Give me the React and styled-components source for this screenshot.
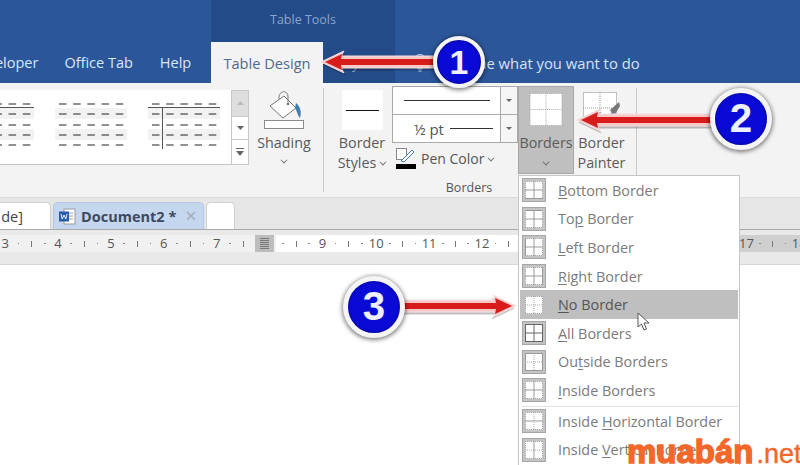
import React from "react";
import styled, { createGlobalStyle } from "styled-components";

const Global = createGlobalStyle`
  html, body { margin: 0; padding: 0; background: #fff; }
  body { width: 800px; height: 465px; overflow: hidden; font-family: "Open Sans", "Noto Sans", sans-serif; }
  #root { width: 800px; height: 465px; }
`;

const Page = styled.div`
  position: relative; width: 800px; height: 465px; overflow: hidden; background: #fff;
  display: flex; flex-direction: column;
`;
const TitleBar = styled.div`
  height: 42px; background: #2b579a; display: flex; padding-left: 211px; flex: none;
`;
const ContextLabel = styled.div`
  width: 184px; background: #234b87; color: #8aa6d2; font-size: 12.5px; text-align: center; line-height: 40px;
`;
const TabBar = styled.div`
  height: 41px; background: #2b579a; display: flex; flex: none; align-items: stretch;
`;
const MainTabs = styled.div`
  width: 211px; flex: none; display: flex; overflow: hidden;
`;
const Tab = styled.div`
  color: #dbe6f5; font-size: 14.5px; line-height: 42px; white-space: nowrap; flex: none;
  margin-left: ${p => p.$ml ?? 0}px;
`;
const ContextTabs = styled.div`
  display: flex; background: #234b87; width: 184px; flex: none;
`;
const ActiveTab = styled.div`
  width: 112px; background: #f3f3f3; color: #4e6a92; font-size: 14.6px; line-height: 42px; text-align: center; flex: none;
`;
const ContextTab = styled.div`
  flex: 1; color: #8aa0c4; font-size: 14px; line-height: 42px; text-align: center;
`;
const TellMe = styled.div`
  color: #d6e3f5; font-size: 14.8px; line-height: 42px; margin-left: 18px; display: flex; align-items: center; gap: 18px; white-space: nowrap;
`;

const Ribbon = styled.div`
  height: 115px; background: #f3f3f3; border-bottom: 1px solid #dcdcdc; display: flex; flex: none; box-sizing: border-box;
`;
const GalleryWrap = styled.div`
  width: 250px; flex: none; padding-top: 7px; display: flex; align-items: flex-start;
`;
const Gallery = styled.div`
  width: 269px; height: 75px; background: #fff; border-bottom: 1px solid #c6c6c6; display: flex; gap: 21px; padding-top: 10px; box-sizing: border-box; margin-left: -38px; flex: none;
`;
const Scroller = styled.div`
  width: 18px; height: 75px; display: flex; flex-direction: column; border: 1px solid #c8c8c8; box-sizing: border-box; background: #fff; flex: none;
`;
const ScrollBtn = styled.div`
  flex: ${p => p.$h}; background: ${p => p.$off ? "#dedede" : "#fff"}; display: flex; align-items: center; justify-content: center; color: #6a6a6a;
  & + & { border-top: 1px solid #c8c8c8; }
`;
const ShadingCol = styled.div`
  width: 68px; flex: none; padding-top: 7px; display: flex; flex-direction: column; align-items: center; margin-right: 5px;
`;
const ShadingText = styled.div`
  font-size: 14.3px; line-height: 20px; color: #5a5a5a; text-align: center; white-space: nowrap; margin-top: 3px;
`;
const BigLabel = styled.div`
  font-size: 14.3px; line-height: 20px; color: #5a5a5a; text-align: center; white-space: nowrap;
`;
const Chev = styled.span`
  display: inline-block; width: 5px; height: 5px; border-right: 1px solid #666; border-bottom: 1px solid #666;
  transform: rotate(45deg) scale(.8); margin: ${p => p.$m || "0 0 3px 4px"};
`;
const Sep = styled.div`
  width: 1px; background: #c8c8c8; margin: 5px 0 5px; flex: none;
`;
const Group = styled.div`
  width: 312px; flex: none; display: flex; flex-direction: column;
`;
const GroupTools = styled.div`
  height: 91px; display: flex; padding-top: 3px;
`;
const GroupLabel = styled.div`
  text-align: center; font-size: 12.5px; color: #555; padding-right: 22px; line-height: 18px; margin-top: 4px;
`;
const StylesCol = styled.div`
  width: 68px; flex: none; display: flex; flex-direction: column; align-items: center; padding: 4px 0 0 8px; box-sizing: border-box;
`;
const Swatch = styled.div`
  width: 41px; height: 40px; background: #fff; display: flex; align-items: center; justify-content: center; margin-bottom: 3px;
  &::after { content: ""; width: 33px; height: 1px; background: #111; }
`;
const CombosCol = styled.div`
  width: 126px; flex: none; display: flex; flex-direction: column;
`;
const Combo = styled.div`
  height: 29px; display: flex; border: 1px solid #a9a9a9; box-sizing: border-box; background: #fff; margin-top: ${p => p.$first ? 0 : "-1px"};
`;
const ComboBody = styled.div`
  flex: 1; display: flex; align-items: center; justify-content: center; gap: 6px; font-size: 15px; color: #555; padding-left: ${p => p.$pl ?? 0}px;
`;
const Rule = styled.span`
  display: block; width: ${p => p.$w}px; height: 1px; background: #333;
`;
const ComboBtn = styled.div`
  width: 16px; border-left: 1px solid #a9a9a9; background: #f6f6f6; display: flex; align-items: center; justify-content: center;
  &::after { content: ""; border: 3px solid transparent; border-top: 3px solid #666; margin-top: 3px; }
`;
const PenRow = styled.div`
  display: flex; align-items: center; gap: 5px; padding: 4px 0 0 4px; font-size: 14px; color: #555;
`;
const BordersBtn = styled.div`
  width: 56px; height: 88px; flex: none; background: #bfbfbf; border: 1px solid #a8a8a8; box-sizing: border-box; display: flex; flex-direction: column; align-items: center; padding-top: 6px;
`;
const PainterBtn = styled.div`
  width: 55px; flex: none; display: flex; flex-direction: column; align-items: center; padding-top: 6px;
`;
const ToolLabels = styled.div`
  margin-top: 7px;
`;
const GroupEnd = styled.div`
  width: 6px; flex: none;
`;

const TabStrip = styled.div`
  height: 32px; flex: none; background: #e6e6e6; border-bottom: 1px solid #aaa; box-sizing: border-box; display: flex; align-items: flex-end; padding-top: 4px;
`;
const DocTab = styled.div`
  height: 27px; box-sizing: border-box; width: ${p => p.$w}px; margin-left: ${p => p.$ml ?? 3}px; flex: none;
  background: ${p => p.$active ? "#c5d6ef" : "#fff"}; border: 1px solid ${p => p.$active ? "#b4c6e2" : "#cfcfcf"}; border-bottom: 0;
  border-radius: 5px 5px 0 0; display: flex; align-items: center; gap: 5px; padding-left: 5px;
  justify-content: ${p => p.$end ? "flex-end" : "flex-start"}; padding-right: ${p => p.$end ? 27 : 0}px;
  color: ${p => p.$active ? "#3d4a60" : "#444"}; font-size: 14.5px; font-weight: ${p => p.$active ? 700 : 400}; white-space: nowrap;
`;
const DocClose = styled.span`
  color: #a3abb5; font-weight: 400; font-size: 20px; line-height: 20px; margin-left: 4px;
`;

const RulerZone = styled.div`
  height: 35px; flex: none; background: #e9e9e9; border-bottom: 1px solid #d6d6d6; box-sizing: border-box; padding-top: 5px;
`;
const Ruler = styled.div`
  position: relative; height: 17px; overflow: hidden; display: flex;
  background: linear-gradient(to right, #f1f1f1 255px, #fff 255px, #fff 740px, #cfcfcf 740px);
`;
const RulerTrack = styled.div`
  display: flex; margin-left: -1.5px; flex: none;
`;
const Cell = styled.div`
  width: 52.9px; flex: none; display: grid; grid-template-columns: repeat(4, 1fr); justify-items: center; align-items: center; font-size: 13px; line-height: 17px; color: #555;
`;
const Dot = styled.span`
  width: 1.5px; height: 1.5px; background: #888;
`;
const Tick = styled.span`
  width: 1px; height: 6px; background: #777;
`;
const Marker = styled.div`
  position: absolute; left: 255px; top: 0; width: 19px; height: 17px;
  background: #bdbdbd; display: flex; align-items: center; justify-content: center;
  box-shadow: 2px 0 0 #f1f1f1;
  &::after { content: ""; width: 9px; height: 11px; background: repeating-linear-gradient(0deg, #777 0 1px, #bbb 1px 2px); }
`;
const Doc = styled.div`
  flex: 1; background: #fff;
`;

const Menu = styled.div`
  position: absolute; left: 518px; top: 175px; width: 222px; height: 300px; background: #fff; border: 1px solid #c6c6c6; box-sizing: border-box;
  padding: 0 1px;
`;
const MenuRow = styled.div`
  height: 28.6px; display: flex; align-items: center; gap: 12px; padding-left: 2px; white-space: nowrap;
  background: ${p => p.$hover ? "#bfbfbf" : "transparent"}; color: ${p => p.$hover ? "#555" : "#7b7b7b"};
  font-size: 14.4px;
  & u { text-underline-offset: 2px; }
`;
const MenuDivider = styled.div`
  height: 1px; background: #e3e3e3; margin: 1px 0 0 2px;
`;

const Badge = styled.div`
  position: absolute; left: ${p => p.$x - p.$r}px; top: ${p => p.$y - p.$r}px; width: ${p => p.$r * 2}px; height: ${p => p.$r * 2}px;
  border-radius: 50%; background: #0a0ad6; box-sizing: border-box; border: ${p => Math.round(p.$r * .17)}px solid #f4f4f4;
  box-shadow: 0 1px 4px 1px rgba(0,0,0,.5), inset 0 0 3px rgba(0,0,60,.7);
  color: #eef0ff; font-family: "Liberation Sans", sans-serif; font-weight: 700; font-size: ${p => p.$r * 1.3}px;
  display: flex; align-items: center; justify-content: center;
`;
const Overlay = styled.svg`
  position: absolute; left: ${p => p.$x}px; top: ${p => p.$y}px; overflow: visible;
`;
const Watermark = styled.div`
  position: absolute; left: 627px; top: 432px; white-space: nowrap; color: #f2682a; font-family: "Liberation Sans", sans-serif;
  line-height: 40px; display: flex; align-items: baseline;
`;
const WmBrand = styled.span`
  font-size: 33px; font-weight: 700; -webkit-text-stroke: 1.4px #f2682a;
`;
const WmTld = styled.span`
  font-size: 27px; font-weight: 400; -webkit-text-stroke: .4px #f2682a; margin-left: 3px;
`;

const Thumb = ({ line, vert, w = 72 }) => {
  const rows = [4, 14, 25, 35, 45];
  const xs = Array.from({ length: 5 }, (_, i) => 4 + i * 14.2);
  return (
    <svg width={w} height={52} viewBox={`0 0 ${w} 52`} style={{ flex: "none" }}>
      <rect x="0" y="8" width={w} height="11" fill="#f2f2f2" />
      <rect x="0" y="29" width={w} height="11" fill="#f2f2f2" />
      {rows.map(y => xs.map(x => <line key={`${x}-${y}`} x1={x} x2={x + 7.5} y1={y} y2={y} stroke="#222" strokeWidth="1" />))}
      {line && <line x1="0" x2={w} y1="7.5" y2="7.5" stroke="#555" />}
      {vert && <line x1="14.5" x2="14.5" y1="8" y2="49" stroke="#555" />}
    </svg>
  );
};

const Grid = ({ size = 34, sides = "", dark = "#8c8c8c" }) => {
  const m = size / 2;
  const s = sides;
  const dot = { stroke: "#a8a8a8", strokeWidth: 1, strokeDasharray: "1 1" };
  const solid = { stroke: dark, strokeWidth: 1 };
  const pick = k => (s.includes(k) ? solid : dot);
  return (
    <svg width={size} height={size} viewBox={`0 0 ${size} ${size}`}>
      <rect x="0.5" y="0.5" width={size - 1} height={size - 1} fill="#fff" />
      <line x1="0" x2={size} y1="0.5" y2="0.5" {...pick("t")} />
      <line x1="0" x2={size} y1={size - .5} y2={size - .5} {...pick("b")} />
      <line x1="0.5" x2="0.5" y1="0" y2={size} {...pick("l")} />
      <line x1={size - .5} x2={size - .5} y1="0" y2={size} {...pick("r")} />
      <line x1="0" x2={size} y1={m} y2={m} {...pick("h")} />
      <line x1={m} x2={m} y1="0" y2={size} {...pick("v")} />
    </svg>
  );
};

const TileBox = styled.span`
  width: 24px; height: 24px; flex: none; display: flex; align-items: center; justify-content: center;
  background: ${p => p.$bare ? "transparent" : "#c4c4c4"}; border: 1px solid ${p => p.$bare ? "transparent" : "#a6a6a6"}; box-sizing: border-box;
`;

const items = [
  [<><u>B</u>ottom Border</>, "bhv"],
  [<>To<u>p</u> Border</>, "thv"],
  [<><u>L</u>eft Border</>, "lhv"],
  [<><u>R</u>ight Border</>, "rhv"],
  [<><u>N</u>o Border</>, "", true],
  [<><u>A</u>ll Borders</>, "tblrhv"],
  [<>Ou<u>t</u>side Borders</>, "tblr"],
  [<><u>I</u>nside Borders</>, "hv"],
  null,
  [<>Inside <u>H</u>orizontal Border</>, "h"],
  [<>Inside <u>V</u>ertical Border</>, "v"],
];

const Arrow = ({ x, y, len, flip }) => {
  const h = 20;
  const shape = `M${h} -6 L${len} -6 L${len} 6 L${h} 6 L${h + 3} 11 L0 0 L${h + 3} -11 Z`;
  return (
    <Overlay $x={x} $y={y} width={len} height={1} style={{ transform: flip ? "scaleX(-1)" : undefined, transformOrigin: "0 0" }}>
      <path d={shape} fill="#000" opacity=".25" transform="translate(1.5 2.5)" />
      <path d={shape} fill="#f6c9c9" stroke="#f8dede" strokeWidth="1" />
      <path d={`M${h} -3 L${len} -3 L${len} 3 L${h} 3 L${h + 1} 8 L4 0 L${h + 1} -8 Z`} fill="#d81c1c" />
    </Overlay>
  );
};

const rulerCell = (n, i) => (
  <Cell key={i}>
    <span>{n}</span>
    <Dot />
    <Tick />
    <Dot />
  </Cell>
);

export default function App() {
  return (
    <Page>
      <Global />
      <TitleBar><ContextLabel>Table Tools</ContextLabel></TitleBar>
      <TabBar>
        <MainTabs>
          <Tab $ml={-31}>Developer</Tab>
          <Tab $ml={26}>Office Tab</Tab>
          <Tab $ml={27}>Help</Tab>
        </MainTabs>
        <ContextTabs>
          <ActiveTab>Table Design</ActiveTab>
          <ContextTab>Layout</ContextTab>
        </ContextTabs>
        <TellMe>
          <svg width="14" height="20" viewBox="0 0 14 20" fill="none" stroke="#c9d8ee" strokeWidth="1">
            <circle cx="7" cy="7" r="5.5" />
            <path d="M5 13v3h4v-3M5.5 18h3" />
          </svg>
          Tell me what you want to do
        </TellMe>
      </TabBar>
      <Ribbon>
        <GalleryWrap>
          <Gallery>
            <Thumb line />
            <Thumb />
            <Thumb line vert />
          </Gallery>
          <Scroller>
            <ScrollBtn $h={26} $off><svg width="7" height="4"><path d="M0 4 L3.5 0 L7 4Z" fill="#bbb" /></svg></ScrollBtn>
            <ScrollBtn $h={24}><svg width="7" height="4"><path d="M0 0 L3.5 4 L7 0Z" fill="#666" /></svg></ScrollBtn>
            <ScrollBtn $h={25}><svg width="8" height="8"><path d="M0 0H8V1H0Z M0 3 L4 8 L8 3Z" fill="#666" /></svg></ScrollBtn>
          </Scroller>
        </GalleryWrap>
        <ShadingCol>
          <svg width="42" height="40" viewBox="0 0 42 40" fill="none">
            <path d="M7 16 L21 6 L33 18 L20 28 Z" fill="#fff" stroke="#777" />
            <path d="M16 9 C15 1 24 -1 25 6 L25 13" stroke="#777" />
            <circle cx="25" cy="14" r="1.3" fill="#777" />
            <path d="M33 13 C37 16 39 22 37 28 C35 26 34 21 32 18 Z" fill="#3f7cb0" />
            <rect x="1.5" y="30.5" width="39" height="8" fill="#fff" stroke="#8a8a8a" />
          </svg>
          <ShadingText>Shading</ShadingText>
          <Chev $m="4px 0 0 0" />
        </ShadingCol>
        <Sep />
        <Group>
          <GroupTools>
            <StylesCol>
              <Swatch />
              <BigLabel>Border</BigLabel>
              <BigLabel>Styles<Chev /></BigLabel>
            </StylesCol>
            <CombosCol>
              <Combo $first>
                <ComboBody><Rule $w={86} /></ComboBody>
                <ComboBtn />
              </Combo>
              <Combo>
                <ComboBody $pl={14}>½ pt <Rule $w={43} /></ComboBody>
                <ComboBtn />
              </Combo>
              <PenRow>
                <svg width="20" height="22" viewBox="0 0 20 22" fill="none">
                  <rect x="0.5" y="1.5" width="10" height="11" fill="#fff" stroke="#888" />
                  <path d="M5 14 L16 3 L18 5 L8 15 Z" fill="#fff" stroke="#3f7cb0" />
                  <rect x="0" y="17" width="20" height="5" fill="#000" />
                </svg>
                <span>Pen Color<Chev /></span>
              </PenRow>
            </CombosCol>
            <BordersBtn>
              <Grid size={34} />
              <ToolLabels>
                <BigLabel>Borders</BigLabel>
                <BigLabel><Chev $m="0 0 3px 0" /></BigLabel>
              </ToolLabels>
            </BordersBtn>
            <PainterBtn>
              <svg width="38" height="34" viewBox="0 0 38 34" fill="none">
                <rect x="0.5" y="0.5" width="33" height="31" fill="#fff" stroke="#888" strokeDasharray="1 1" />
                <path d="M17 0V32M0 16H34" stroke="#999" strokeDasharray="1 1" />
                <path d="M27 18 L36 10 L37 14 L31 24 Z" fill="#777" />
                <path d="M19 30 L29 20 L31 24 L24 33 Z" fill="#3f6ea8" />
              </svg>
              <ToolLabels>
                <BigLabel>Border</BigLabel>
                <BigLabel>Painter</BigLabel>
              </ToolLabels>
            </PainterBtn>
            <GroupEnd />
          </GroupTools>
          <GroupLabel>Borders</GroupLabel>
        </Group>
        <Sep />
      </Ribbon>
      <TabStrip>
        <DocTab $ml={-10} $w={61} $end>de]</DocTab>
        <DocTab $active $w={151} $ml={2}>
          <svg width="17" height="17" viewBox="0 0 17 17">
            <rect x="5" y="1" width="11" height="15" fill="#fff" stroke="#9a9a9a" />
            <path d="M8 5h6M8 8h6M8 11h6" stroke="#a0a0a0" />
            <rect x="0" y="3.5" width="10" height="10" fill="#2b5cab" />
            <path d="M2 6 L3.2 11 L5 7 L6.8 11 L8 6" stroke="#fff" fill="none" strokeWidth=".9" />
          </svg>
          Document2 *
          <DocClose>×</DocClose>
        </DocTab>
        <DocTab $w={29} $ml={2} />
      </TabStrip>
      <RulerZone>
        <Ruler>
          <RulerTrack>
            {[3, 4, 5, 6, 7, "", 9, 10, 11, 12, 13, 14, 15, 16, 17, 18].map(rulerCell)}
          </RulerTrack>
          <Marker />
        </Ruler>
      </RulerZone>
      <Doc />

      <Menu>
        {items.map((it, i) =>
          it === null ? <MenuDivider key={i} /> : (
            <MenuRow key={i} $hover={it[2]}>
              <TileBox $bare={it[2]}><Grid size={18} sides={it[1]} dark={it[1].length === 6 ? "#666" : "#999"} /></TileBox>
              <span>{it[0]}</span>
            </MenuRow>
          )
        )}
      </Menu>

      <Overlay $x={637} $y={312} width="15" height="20" viewBox="0 0 15 20">
        <path d="M1 1 L1 15 L4.5 12 L7 18 L9.5 17 L7 11 L12 11 Z" fill="#fff" stroke="#555" strokeWidth="1" />
      </Overlay>

      <Arrow x={321} y={62} len={116} />
      <Arrow x={577} y={120} len={136} />
      <Arrow x={516} y={306} len={112} flip />

      <Badge $x={459} $y={62} $r={26}>1</Badge>
      <Badge $x={741} $y={119} $r={31}>2</Badge>
      <Badge $x={374} $y={307} $r={31}>3</Badge>

      <Watermark>
        <WmBrand>muabán</WmBrand>
        <WmTld>.net</WmTld>
      </Watermark>
    </Page>
  );
}
